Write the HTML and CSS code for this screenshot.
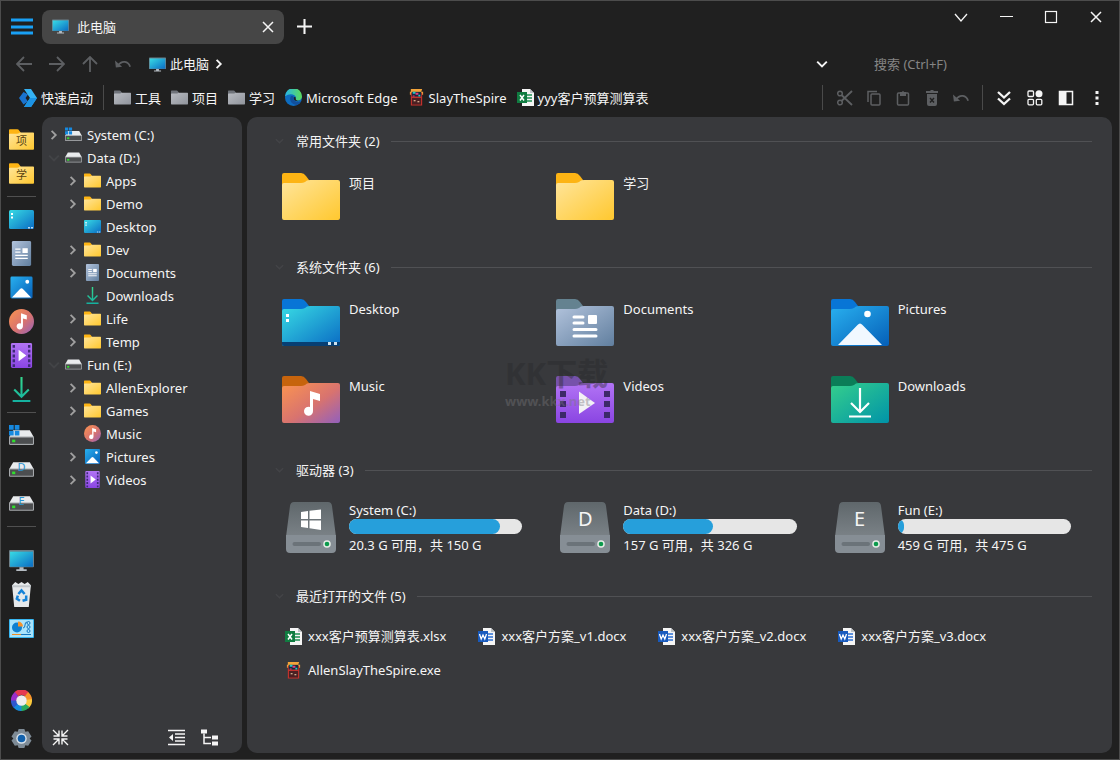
FILE: index.html
```html
<!DOCTYPE html>
<html lang="zh-CN">
  <head>
    <title>此电脑</title>
    <meta charset="UTF-8">
    <meta name="viewport" content="width=device-width, initial-scale=1">
    <link rel="stylesheet" href="styles.css">
  </head>
  <body>
    <!-- icon sprite -->
    <svg class="sprite" aria-hidden="true">
      <defs>
        <linearGradient id="g-yellow" x1="0" y1="0" x2="1" y2="1"><stop offset="0" stop-color="#ffe59b"/><stop offset="1" stop-color="#ffc82f"/></linearGradient>
        <linearGradient id="g-gray" x1="0" y1="0" x2="1" y2="1"><stop offset="0" stop-color="#b9bcc2"/><stop offset="1" stop-color="#90949c"/></linearGradient>
        <linearGradient id="g-cyan" x1="0" y1="0" x2="1" y2="1"><stop offset="0" stop-color="#38dbe4"/><stop offset="1" stop-color="#0a6cc4"/></linearGradient>
        <linearGradient id="g-blue" x1="0" y1="0" x2="1" y2="1"><stop offset="0" stop-color="#29b0ef"/><stop offset="1" stop-color="#055fb8"/></linearGradient>
        <linearGradient id="g-doc" x1="0" y1="0" x2="1" y2="1"><stop offset="0" stop-color="#b2c3dc"/><stop offset="1" stop-color="#617f9f"/></linearGradient>
        <linearGradient id="g-music" x1="0" y1="0" x2="1" y2="1"><stop offset="0" stop-color="#fb9450"/><stop offset=".55" stop-color="#d8736f"/><stop offset="1" stop-color="#9260bd"/></linearGradient>
        <linearGradient id="g-video" x1="0" y1="0" x2="0" y2="1"><stop offset="0" stop-color="#b274f5"/><stop offset="1" stop-color="#8a45e2"/></linearGradient>
        <linearGradient id="g-down" x1="0" y1="0" x2="1" y2="1"><stop offset="0" stop-color="#35cf8c"/><stop offset="1" stop-color="#0093a8"/></linearGradient>
        <linearGradient id="g-line" gradientUnits="userSpaceOnUse" x1="0" y1="0" x2="0" y2="24"><stop offset="0" stop-color="#35d98f"/><stop offset="1" stop-color="#14b0a0"/></linearGradient>
        <linearGradient id="g-drive" x1="0" y1="0" x2="0" y2="1"><stop offset="0" stop-color="#5f676b"/><stop offset="1" stop-color="#7b8287"/></linearGradient>
        <linearGradient id="g-edge" x1="0" y1="0" x2="1" y2="0"><stop offset="0" stop-color="#28b5e8"/><stop offset="1" stop-color="#5ddc58"/></linearGradient>
        <path id="folder-back" d="M0 2Q0 0 2 0H19Q22 0 24 3L27 7V14H0Z"/>
        <path id="folder-front" d="M0 12Q0 10 2 10H19Q21 10 23 9L25 7.500Q26 7 28 7H56Q58 7 58 9V45Q58 47 56 47H2Q0 47 0 45Z"/>
        <path id="note" d="M28 15L38 18V25L31 23V35A4.500 4.500 0 1 1 28 31Z"/>
      </defs>

      <symbol id="i-menu" viewBox="0 0 22 18"><path d="M0 2H22M0 9H22M0 15H22" stroke="#19a0f5" stroke-width="3"/></symbol>
      <symbol id="i-pc" viewBox="0 0 24 20"><rect width="24" height="16.500" rx="1" fill="#6d7f88"/><rect x="1" y="1.500" width="22" height="14.500" fill="url(#g-cyan)"/><path d="M10 16.500H14V18.500H17V20H7V18.500H10Z" fill="#b5bcc2"/></symbol>
      <symbol id="i-x" viewBox="0 0 12 12"><path d="M1 1L11 11M11 1L1 11" stroke="currentColor" stroke-width="1.500"/></symbol>
      <symbol id="i-plus" viewBox="0 0 16 16"><path d="M8 0V16M0 8H16" stroke="currentColor" stroke-width="2.200"/></symbol>
      <symbol id="i-left" viewBox="0 0 16 16"><path d="M16 8H1M8 1L1 8L8 15" fill="none" stroke="currentColor" stroke-width="1.800"/></symbol>
      <symbol id="i-right" viewBox="0 0 16 16"><path d="M0 8H15M8 1L15 8L8 15" fill="none" stroke="currentColor" stroke-width="1.800"/></symbol>
      <symbol id="i-up" viewBox="0 0 16 16"><path d="M8 16V1M1 8L8 1L15 8" fill="none" stroke="currentColor" stroke-width="1.800"/></symbol>
      <symbol id="i-undo" viewBox="0 0 18 12"><path d="M3 8C8 1 15 3 17 9" fill="none" stroke="currentColor" stroke-width="2"/><path d="M0 2L1 10L8 9Z" fill="currentColor"/></symbol>
      <symbol id="i-chev-r" viewBox="0 0 10 10"><path d="M3 1.500L6.500 5L3 8.500" fill="none" stroke="currentColor" stroke-width="1.500"/></symbol>
      <symbol id="i-chev-d" viewBox="0 0 10 10"><path d="M1 3L5 7L9 3" fill="none" stroke="currentColor" stroke-width="1.600"/></symbol>
      <symbol id="i-wide-d" viewBox="0 0 14 14"><path d="M1 4L7 11L13 4" fill="none" stroke="currentColor" stroke-width="1.300"/></symbol>
      <symbol id="i-min" viewBox="0 0 14 14"><path d="M1 6.500H14" stroke="currentColor"/></symbol>
      <symbol id="i-max" viewBox="0 0 14 14"><rect x="1.500" y="1.500" width="11" height="11" fill="none" stroke="currentColor" stroke-width="1.200"/></symbol>

      <symbol id="i-launch" viewBox="0 0 18 18"><path d="M4.500 3L0 9L4.500 15.500L9 12.500L6.500 9L9 5.500Z" fill="#1a73cf"/><path d="M5 0H12L15 4.500L18 9L15 13.500L12 18H5L11 9Z" fill="#35b2f3"/><path d="M11 9H18L12 18H5Z" fill="#1c93e4"/></symbol>
      <symbol id="i-folder" viewBox="0 0 58 47"><use href="#folder-back" fill="#fdb414"/><use href="#folder-front" fill="url(#g-yellow)"/></symbol>
      <symbol id="i-gfolder" viewBox="0 0 58 47"><use href="#folder-back" fill="#6f737a"/><use href="#folder-front" fill="url(#g-gray)"/></symbol>
      <symbol id="i-edge" viewBox="0 0 18 18"><circle cx="9" cy="9" r="9" fill="#0d6cc0"/><path d="M0 8A9 9 0 0 1 18 8C18 11 15 13 12 12C10.500 11.500 11.500 10.500 11.500 9C11.500 6 5 3.500 0 8Z" fill="url(#g-edge)"/><path d="M6 8C4 13 8 17 13 17A9 9 0 0 0 17 13C13 15 8.500 13 9 9C9 7.500 7 7 6 8Z" fill="#124f9c"/><path d="M9.500 8.500C8.500 11.500 11 14 16 12.500C13.500 13 10.500 12 11.500 9Z" fill="#202020"/></symbol>
      <symbol id="i-spire" viewBox="0 0 16 18"><path d="M2 0H14L13 3H15V6H1V3H2Z" fill="#f3a43a"/><rect x="2" y="4" width="12" height="13.500" fill="#c5322d"/><rect x="3" y="3" width="10" height="5" fill="#142b3c"/><path d="M4 3H7V5H4ZM10 6H12V8H10Z" fill="#24c5ca"/><path d="M7 4H10V6H7ZM4 7H6V8H4Z" fill="#e33c83"/><rect x="3.200" y="9.500" width="9.600" height="7" fill="#4b2023"/><path d="M5 12H7V13H5ZM9 13H11V14H9Z" fill="#ffd9b0"/></symbol>
      <symbol id="i-excel" viewBox="0 0 17 17"><path d="M5 0H13L17 4V17H5Z" fill="#f5f5f5"/><path d="M13 0V4H17Z" fill="#bfc4c8"/><path d="M10 6H15M10 9H15M10 12H15" stroke="#1d8f52" stroke-width="1.400"/><rect y="3" width="10" height="11" fill="#107c41"/><path d="M3 6L7 11.500M7 6L3 11.500" stroke="#fff" stroke-width="1.500"/></symbol>
      <symbol id="i-word" viewBox="0 0 17 17"><path d="M5 0H13L17 4V17H5Z" fill="#f5f5f5"/><path d="M13 0V4H17Z" fill="#bfc4c8"/><path d="M10 6H15M10 9H15M10 12H15" stroke="#2b6fd3" stroke-width="1.400"/><rect y="3" width="10" height="11" fill="#185abd"/><path d="M1.500 6L3.200 11L5 7L6.800 11L8.500 6" fill="none" stroke="#fff" stroke-width="1.300"/></symbol>

      <symbol id="i-cut" viewBox="0 0 16 16"><path d="M4.500 5L15 15M4.500 11L15 1" stroke="currentColor" stroke-width="1.800"/><circle cx="3" cy="3.500" r="2.300" fill="none" stroke="currentColor" stroke-width="1.500"/><circle cx="3" cy="12.500" r="2.300" fill="none" stroke="currentColor" stroke-width="1.500"/></symbol>
      <symbol id="i-copy" viewBox="0 0 16 16"><rect x="5" y="4" width="9" height="11" rx="1" fill="none" stroke="currentColor" stroke-width="1.500"/><path d="M2 12V1.500H11" fill="none" stroke="currentColor" stroke-width="1.500"/></symbol>
      <symbol id="i-paste" viewBox="0 0 16 16"><rect x="2.500" y="3" width="11" height="12" rx="1" fill="none" stroke="currentColor" stroke-width="1.500"/><path d="M5 6V2H7Q8 0 9 2H11V6Z" fill="currentColor"/></symbol>
      <symbol id="i-trash" viewBox="0 0 16 16"><path d="M2 1H6L7 0H9L10 1H14V3H2ZM3 4H13V14Q13 16 11 16H5Q3 16 3 14Z" fill="currentColor"/><path d="M6 8L10 12.500M10 8L6 12.500" stroke="#202020" stroke-width="1.400"/></symbol>
      <symbol id="i-dbl" viewBox="0 0 16 16"><path d="M2 2L8 7.500L14 2M2 8.500L8 14L14 8.500" fill="none" stroke="currentColor" stroke-width="2.300"/></symbol>
      <symbol id="i-grid" viewBox="0 0 16 16"><g fill="none" stroke="currentColor" stroke-width="1.300"><rect x="1" y="1" width="5.500" height="5.500" rx="1"/><rect x="1" y="9.300" width="5.500" height="5.500" rx="1"/><rect x="9.300" y="9.300" width="5.500" height="5.500" rx="1"/></g><circle cx="12" cy="3.700" r="3.500" fill="currentColor"/></symbol>
      <symbol id="i-panel" viewBox="0 0 16 16"><rect x="1.500" y="1.500" width="13" height="13" fill="none" stroke="currentColor" stroke-width="1.500"/><rect x="1" y="1" width="7.500" height="14" fill="currentColor"/></symbol>
      <symbol id="i-dots" viewBox="0 0 16 16"><path d="M6.500 1H9.500V4H6.500ZM6.500 6.500H9.500V9.500H6.500ZM6.500 12H9.500V15H6.500Z" fill="currentColor"/></symbol>

      <symbol id="i-desktop" viewBox="0 0 25 19"><rect width="25" height="19" rx="1.500" fill="url(#g-cyan)"/><path d="M2 3H4V5H2ZM2 6.500H4V8.500H2Z" fill="#fff"/><path d="M19 17H21V18.500H19ZM22 17H24V18.500H22Z" fill="#b9d9f2"/></symbol>
      <symbol id="i-doc" viewBox="0 0 20 26"><rect width="20" height="26" rx="1.500" fill="url(#g-doc)"/><path d="M3.500 8.500H9M3.500 11.500H9M3.500 15H16.500M3.500 18H16.500" stroke="#fff" stroke-width="1.400"/><rect x="11" y="7.500" width="5.500" height="5" fill="#fff"/></symbol>
      <symbol id="i-pic" viewBox="0 0 26 26"><rect x="1.500" y="1.500" width="23" height="23" rx="1.500" fill="url(#g-blue)"/><path d="M3 23.500L11.500 14.500Q13 13 14.500 14.500L23 23.500Z" fill="#fff"/><circle cx="19" cy="7" r="2" fill="#fff"/></symbol>
      <symbol id="i-music" viewBox="0 0 26 26"><circle cx="13" cy="13" r="13" fill="url(#g-music)"/><path d="M12.500 4.500L18.500 6.500V11L14.500 10V18A3.300 3.300 0 1 1 12.500 15Z" fill="#fff"/></symbol>
      <symbol id="i-video" viewBox="0 0 22 26"><rect width="22" height="26" rx="1.500" fill="url(#g-video)"/><path d="M3 2V25M19 2V25" stroke="#3e2b77" stroke-width="2.500" stroke-dasharray="3 2"/><path d="M8 7L16 13L8 19Z" fill="#fff"/></symbol>
      <symbol id="i-down" viewBox="0 0 20 24"><path d="M10 0V19M3 12L10 19L17 12M1.500 23H18.500" fill="none" stroke="url(#g-line)" stroke-width="2"/></symbol>
      <symbol id="i-drive" viewBox="0 0 24 16"><path d="M4 1H20L24 8H0Z" fill="#e9ebed"/><rect y="7" width="24" height="8" rx="1" fill="#a6a9ac"/><rect x="1" y="8" width="22" height="6" fill="#4c4e50"/><rect x="3" y="10" width="3" height="2.500" fill="#30e02d"/></symbol>
      <symbol id="i-drive-c" viewBox="0 0 24 20"><use href="#i-drive" y="4" width="24" height="16"/><path d="M0 0H4.500V4.500H0ZM5.500 0H10V4.500H5.500ZM0 5.500H4.500V10H0ZM5.500 5.500H10V10H5.500Z" fill="#1689e0"/></symbol>
      <symbol id="i-bin" viewBox="0 0 20 24"><path d="M1 3L4 0L7 2L10 0L13 2L16 0L19 3L17 24H3Z" fill="#e6e9eb"/><path d="M1 3H19L18.700 5H1.300Z" fill="#c3c8cc"/><path d="M7 11.500L10 8L13 11.500M14.500 13L14.500 17L11 18M8.500 18L5.500 16L6.500 13" fill="none" stroke="#1683d8" stroke-width="2.400"/></symbol>
      <symbol id="i-control" viewBox="0 0 25 19"><rect width="25" height="19" rx="1" fill="#38b6f1"/><rect x="1" y="1" width="23" height="17" fill="#a9e3fb"/><circle cx="8" cy="8.500" r="5" fill="#0f80d0"/><path d="M9 7.500V2.500A5 5 0 0 1 14 7.500Z" fill="#f7932b"/><path d="M3 15.500H12" stroke="#ee8b22"/><path d="M12 15.500H22M14 9Q16 9 16 6T18 3" fill="none" stroke="#1676bd"/><g fill="none" stroke="#1676bd"><circle cx="19.500" cy="4" r="1.500"/><circle cx="19.500" cy="8" r="1.500"/><circle cx="19.500" cy="12" r="1.500"/></g></symbol>
      <symbol id="i-wheel" viewBox="0 0 22 22"><g fill="none" stroke-width="6"><path d="M5.500 4.500A8 8 0 0 1 16.500 4.500" stroke="#e53950"/><path d="M16 4.500A8 8 0 0 1 19 11" stroke="#f7932b"/><path d="M19 10A8 8 0 0 1 16 17" stroke="#fbc93c"/><path d="M17 16A8 8 0 0 1 10 19" stroke="#2bab5c"/><path d="M11 19A8 8 0 0 1 4 15" stroke="#178bdb"/><path d="M5 16.500A8 8 0 0 1 3 10" stroke="#2f57cf"/><path d="M3 11A8 8 0 0 1 6 4.500" stroke="#9a2fc9"/></g><circle cx="11" cy="11" r="5.500" fill="#eee"/></symbol>
      <symbol id="i-gear" viewBox="0 0 22 22"><path d="M8 1H14L15 4L18 3.500L21.500 9L19.500 11L21.500 13L18 18.500L15 18L14 21H8L7 18L4 18.500L.5 13L2.500 11L.5 9L4 3.500L7 4Z" fill="#7e8b96"/><circle cx="11" cy="11" r="5.500" fill="#d9e2ea"/><circle cx="11" cy="11" r="4" fill="#1261ac"/></symbol>
      <symbol id="i-collapse" viewBox="0 0 17 17"><path d="M1 1L6.500 6.500M16 1L10.500 6.500M1 16L6.500 10.500M16 16L10.500 10.500M7 1.500V7H1.500M10 1.500V7H15.500M7 15.500V10H1.500M10 15.500V10H15.500" fill="none" stroke="currentColor" stroke-width="1.400"/></symbol>
      <symbol id="i-outdent" viewBox="0 0 17 16"><path d="M0 1H17M7 4.500H17M7 8H17M7 11.500H17M0 15H17" stroke="currentColor" stroke-width="1.700"/><path d="M5 4.500V11.500L1 8Z" fill="currentColor"/></symbol>
      <symbol id="i-tree" viewBox="0 0 17 16"><path d="M0 0H6V4H0ZM11 6H17V10H11ZM11 12H17V16H11Z" fill="currentColor"/><path d="M3 4V14H10M3 8H10" fill="none" stroke="currentColor" stroke-width="1.500"/></symbol>

      <symbol id="f-desktop" viewBox="0 0 58 47"><use href="#folder-back" fill="#0875d6"/><use href="#folder-front" fill="url(#g-cyan)"/><path d="M0 43H58V45Q58 47 56 47H2Q0 47 0 45Z" fill="#073f73"/><path d="M4 15H7V18H4ZM4 20H7V23H4Z" fill="#fff"/><path d="M46 43H49V46H46ZM52 43H55V46H52Z" fill="#cfe2ee"/></symbol>
      <symbol id="f-doc" viewBox="0 0 58 47"><use href="#folder-back" fill="#648290"/><use href="#folder-front" fill="url(#g-doc)"/><path d="M18 18H27M18 24H27M18 30.500H40M18 37H40" stroke="#fff" stroke-width="3" stroke-linecap="round"/><rect x="32" y="16" width="9" height="9" rx="1" fill="#fff"/></symbol>
      <symbol id="f-pic" viewBox="0 0 58 47"><use href="#folder-back" fill="#0875d6"/><use href="#folder-front" fill="url(#g-blue)"/><path d="M7 46L26.500 26Q29 23 31.500 26L51 46Z" fill="#f1f8ff"/><circle cx="36.500" cy="15" r="3.300" fill="#fff"/></symbol>
      <symbol id="f-music" viewBox="0 0 58 47"><use href="#folder-back" fill="#c7640d"/><use href="#folder-front" fill="url(#g-music)"/><use href="#note" fill="#fff"/></symbol>
      <symbol id="f-video" viewBox="0 0 58 47"><use href="#folder-back" fill="#7652ab"/><use href="#folder-front" fill="url(#g-video)"/><path d="M4 15H10V21H4ZM4 25H10V31H4ZM4 36H10V42H4ZM48 15H54V21H48ZM48 25H54V31H48ZM48 36H54V42H48Z" fill="#3c2968"/><path d="M23 15.500L39 27L23 38Z" fill="#f3f1f5"/></symbol>
      <symbol id="f-down" viewBox="0 0 58 47"><use href="#folder-back" fill="#0b7d58"/><use href="#folder-front" fill="url(#g-down)"/><path d="M29 12V36M20 27L29 36L38 27M18 40.500H40" fill="none" stroke="#fff" stroke-width="2.200"/></symbol>
      <symbol id="d-body" viewBox="0 0 50 51"><path d="M4 4Q4.500 0 8 0H42Q45.500 0 46 4L50 35H0Z" fill="url(#g-drive)"/><path d="M0 33H50V47Q50 51 46 51H4Q0 51 0 47Z" fill="#868e95"/><path d="M8.500 42H33" stroke="#6b7379" stroke-width="4" stroke-linecap="round"/><circle cx="41" cy="42" r="3.800" fill="#e4ece5"/><circle cx="41" cy="42" r="2.300" fill="#0b9a4c"/></symbol>
      <symbol id="d-c" viewBox="0 0 50 51"><use href="#d-body" width="50" height="51"/><path d="M15 10L22 9V17H15ZM23.500 8.700L35 7.500V17H23.500ZM15 18.500H22V26L15 25ZM23.500 18.500H35V28L23.500 26.300Z" fill="#fff"/></symbol>
    </svg>

    <div class="window">
      <header class="titlebar">
        <button class="menu-btn" aria-label="菜单"><svg><use href="#i-menu"/></svg></button>
        <div class="tab">
          <svg class="ico"><use href="#i-pc"/></svg>
          <span>此电脑</span>
          <button class="tab-close" aria-label="关闭标签"><svg><use href="#i-x"/></svg></button>
        </div>
        <button class="tab-add" aria-label="新标签"><svg><use href="#i-plus"/></svg></button>
        <div class="win-controls">
          <button aria-label="更多"><svg><use href="#i-wide-d"/></svg></button>
          <button aria-label="最小化"><svg><use href="#i-min"/></svg></button>
          <button aria-label="最大化"><svg><use href="#i-max"/></svg></button>
          <button aria-label="关闭"><svg><use href="#i-x"/></svg></button>
        </div>
      </header>

      <nav class="address">
        <div class="history">
          <button aria-label="后退"><svg><use href="#i-left"/></svg></button>
          <button aria-label="前进"><svg><use href="#i-right"/></svg></button>
          <button aria-label="向上"><svg><use href="#i-up"/></svg></button>
          <button aria-label="撤销"><svg><use href="#i-undo"/></svg></button>
        </div>
        <button class="crumb"><svg class="ico"><use href="#i-pc"/></svg>此电脑<svg class="chev"><use href="#i-chev-r"/></svg></button>
        <button class="drop" aria-label="历史路径"><svg class="chev"><use href="#i-chev-d"/></svg></button>
        <input class="search" type="search" placeholder="搜索 (Ctrl+F)" aria-label="搜索">
      </nav>

      <div class="toolbar">
        <div class="links">
          <button class="launch"><svg class="ico"><use href="#i-launch"/></svg>快速启动</button>
          <i class="sep"></i>
          <button><svg class="ico"><use href="#i-gfolder"/></svg>工具</button>
          <button><svg class="ico"><use href="#i-gfolder"/></svg>项目</button>
          <button><svg class="ico"><use href="#i-gfolder"/></svg>学习</button>
          <button><svg class="ico"><use href="#i-edge"/></svg>Microsoft Edge</button>
          <button><svg class="ico"><use href="#i-spire"/></svg>SlayTheSpire</button>
          <button><svg class="ico"><use href="#i-excel"/></svg>yyy客户预算测算表</button>
        </div>
        <i class="sep"></i>
        <div class="tools tools-off">
          <button aria-label="剪切"><svg><use href="#i-cut"/></svg></button>
          <button aria-label="复制"><svg><use href="#i-copy"/></svg></button>
          <button aria-label="粘贴"><svg><use href="#i-paste"/></svg></button>
          <button aria-label="删除"><svg><use href="#i-trash"/></svg></button>
          <button aria-label="撤销"><svg><use href="#i-undo"/></svg></button>
        </div>
        <i class="sep"></i>
        <div class="tools">
          <button aria-label="展开"><svg><use href="#i-dbl"/></svg></button>
          <button aria-label="视图"><svg><use href="#i-grid"/></svg></button>
          <button aria-label="面板"><svg><use href="#i-panel"/></svg></button>
          <button aria-label="更多"><svg><use href="#i-dots"/></svg></button>
        </div>
      </div>

      <div class="main">
        <aside class="rail">
          <button class="rail-folder"><svg><use href="#i-folder"/></svg><span>项</span></button>
          <button class="rail-folder"><svg><use href="#i-folder"/></svg><span>学</span></button>
          <hr>
          <button aria-label="桌面"><svg><use href="#i-desktop"/></svg></button>
          <button aria-label="文档"><svg><use href="#i-doc"/></svg></button>
          <button aria-label="图片"><svg><use href="#i-pic"/></svg></button>
          <button aria-label="音乐"><svg><use href="#i-music"/></svg></button>
          <button aria-label="视频"><svg><use href="#i-video"/></svg></button>
          <button aria-label="下载"><svg><use href="#i-down"/></svg></button>
          <hr>
          <button aria-label="C 盘"><svg><use href="#i-drive-c"/></svg></button>
          <button class="rail-drive"><svg><use href="#i-drive"/></svg><span>D</span></button>
          <button class="rail-drive"><svg><use href="#i-drive"/></svg><span>E</span></button>
          <hr>
          <div class="rail-system">
            <button aria-label="此电脑"><svg><use href="#i-pc"/></svg></button>
            <button aria-label="回收站"><svg><use href="#i-bin"/></svg></button>
            <button aria-label="控制面板"><svg><use href="#i-control"/></svg></button>
          </div>
          <div class="rail-bottom">
            <button aria-label="主题"><svg><use href="#i-wheel"/></svg></button>
            <button aria-label="设置"><svg><use href="#i-gear"/></svg></button>
          </div>
        </aside>

        <aside class="tree">
          <ul>
            <li><button><svg class="chev"><use href="#i-chev-r"/></svg><svg class="ico"><use href="#i-drive-c"/></svg>System (C:)</button></li>
            <li><button><svg class="chev open"><use href="#i-chev-d"/></svg><svg class="ico"><use href="#i-drive"/></svg>Data (D:)</button>
              <ul>
                <li><button><svg class="chev"><use href="#i-chev-r"/></svg><svg class="ico"><use href="#i-folder"/></svg>Apps</button></li>
                <li><button><svg class="chev"><use href="#i-chev-r"/></svg><svg class="ico"><use href="#i-folder"/></svg>Demo</button></li>
                <li><button><svg class="chev"></svg><svg class="ico"><use href="#i-desktop"/></svg>Desktop</button></li>
                <li><button><svg class="chev"><use href="#i-chev-r"/></svg><svg class="ico"><use href="#i-folder"/></svg>Dev</button></li>
                <li><button><svg class="chev"><use href="#i-chev-r"/></svg><svg class="ico"><use href="#i-doc"/></svg>Documents</button></li>
                <li><button><svg class="chev"></svg><svg class="ico"><use href="#i-down"/></svg>Downloads</button></li>
                <li><button><svg class="chev"><use href="#i-chev-r"/></svg><svg class="ico"><use href="#i-folder"/></svg>Life</button></li>
                <li><button><svg class="chev"><use href="#i-chev-r"/></svg><svg class="ico"><use href="#i-folder"/></svg>Temp</button></li>
              </ul>
            </li>
            <li><button><svg class="chev open"><use href="#i-chev-d"/></svg><svg class="ico"><use href="#i-drive"/></svg>Fun (E:)</button>
              <ul>
                <li><button><svg class="chev"><use href="#i-chev-r"/></svg><svg class="ico"><use href="#i-folder"/></svg>AllenExplorer</button></li>
                <li><button><svg class="chev"><use href="#i-chev-r"/></svg><svg class="ico"><use href="#i-folder"/></svg>Games</button></li>
                <li><button><svg class="chev"></svg><svg class="ico"><use href="#i-music"/></svg>Music</button></li>
                <li><button><svg class="chev"><use href="#i-chev-r"/></svg><svg class="ico"><use href="#i-pic"/></svg>Pictures</button></li>
                <li><button><svg class="chev"><use href="#i-chev-r"/></svg><svg class="ico"><use href="#i-video"/></svg>Videos</button></li>
              </ul>
            </li>
          </ul>
          <div class="tree-tools">
            <button aria-label="收起"><svg><use href="#i-collapse"/></svg></button>
            <button aria-label="减少缩进"><svg><use href="#i-outdent"/></svg></button>
            <button aria-label="树形"><svg><use href="#i-tree"/></svg></button>
          </div>
        </aside>

        <main class="content">
          <section>
            <h2><svg class="chev open"><use href="#i-chev-d"/></svg>常用文件夹 (2)</h2>
            <div class="grid">
              <a class="item" href="#"><svg class="big"><use href="#i-folder"/></svg>项目</a>
              <a class="item" href="#"><svg class="big"><use href="#i-folder"/></svg>学习</a>
            </div>
          </section>
          <section>
            <h2><svg class="chev open"><use href="#i-chev-d"/></svg>系统文件夹 (6)</h2>
            <div class="grid">
              <a class="item" href="#"><svg class="big"><use href="#f-desktop"/></svg>Desktop</a>
              <a class="item" href="#"><svg class="big"><use href="#f-doc"/></svg>Documents</a>
              <a class="item" href="#"><svg class="big"><use href="#f-pic"/></svg>Pictures</a>
              <a class="item" href="#"><svg class="big"><use href="#f-music"/></svg>Music</a>
              <a class="item" href="#"><svg class="big"><use href="#f-video"/></svg>Videos</a>
              <a class="item" href="#"><svg class="big"><use href="#f-down"/></svg>Downloads</a>
            </div>
            <div class="watermark" aria-hidden="true"><b>KK下载</b><span>www.kkx.net</span></div>
          </section>
          <section>
            <h2><svg class="chev open"><use href="#i-chev-d"/></svg>驱动器 (3)</h2>
            <div class="grid">
              <a class="item drive" href="#"><div class="disk"><svg class="big"><use href="#d-c"/></svg></div>
                <div class="info"><div>System (C:)</div><div class="bar"><div class="used" style="width: 87%"></div></div><div class="free">20.3 G 可用，共 150 G</div></div></a>
              <a class="item drive" href="#"><div class="disk"><svg class="big"><use href="#d-body"/></svg><span>D</span></div>
                <div class="info"><div>Data (D:)</div><div class="bar"><div class="used" style="width: 52%"></div></div><div class="free">157 G 可用，共 326 G</div></div></a>
              <a class="item drive" href="#"><div class="disk"><svg class="big"><use href="#d-body"/></svg><span>E</span></div>
                <div class="info"><div>Fun (E:)</div><div class="bar"><div class="used" style="width: 3.4%"></div></div><div class="free">459 G 可用，共 475 G</div></div></a>
            </div>
          </section>
          <section>
            <h2><svg class="chev open"><use href="#i-chev-d"/></svg>最近打开的文件 (5)</h2>
            <div class="files">
              <a href="#"><svg class="ico"><use href="#i-excel"/></svg>xxx客户预算测算表.xlsx</a>
              <a href="#"><svg class="ico"><use href="#i-word"/></svg>xxx客户方案_v1.docx</a>
              <a href="#"><svg class="ico"><use href="#i-word"/></svg>xxx客户方案_v2.docx</a>
              <a href="#"><svg class="ico"><use href="#i-word"/></svg>xxx客户方案_v3.docx</a>
              <a href="#"><svg class="ico"><use href="#i-spire"/></svg>AllenSlayTheSpire.exe</a>
            </div>
          </section>
        </main>
      </div>
    </div>
  </body>
</html>
```
FILE: styles.css
```css
* {
    box-sizing: border-box;
}

body {
    margin: 0;
    background: #202020;
    color: #f5f5f5;
    font: 13px/20px "Noto Sans", "Noto Sans CJK SC", sans-serif;
}

button {
    display: flex;
    align-items: center;
    justify-content: center;
    padding: 0;
    border: 0;
    background: none;
    color: inherit;
    font: inherit;
    white-space: nowrap;
}

a {
    color: inherit;
    text-decoration: none;
}

svg {
    display: block;
    flex: none;
}

.sprite {
    position: absolute;
    width: 0;
    height: 0;
}

.ico {
    width: 17px;
    height: 17px;
}

.chev {
    width: 12px;
    height: 12px;
}

.window {
    display: flex;
    flex-direction: column;
    min-height: 100vh;
    border: 1px solid #4c4c4c;
}

/* title bar */
.titlebar {
    display: flex;
    align-items: center;
    height: 51px;
}

.menu-btn {
    width: 41px;
}

.menu-btn svg {
    width: 22px;
    height: 18px;
}

.tab {
    display: flex;
    align-items: center;
    gap: 8px;
    width: 242px;
    height: 34px;
    padding: 0 10px;
    border-radius: 8px;
    background: #464646;
}

.tab-close {
    margin-left: auto;
}

.tab-close svg {
    width: 12px;
    height: 12px;
}

.tab-add {
    width: 40px;
}

.tab-add svg {
    width: 15px;
    height: 15px;
}

.win-controls {
    display: flex;
    align-self: flex-start;
    margin: 0 1px 0 auto;
}

.win-controls button {
    width: 45px;
    height: 32px;
}

.win-controls svg {
    width: 14px;
    height: 14px;
}

.win-controls button:last-child svg {
    width: 12px;
}

/* address bar */
.address {
    display: flex;
    align-items: center;
    height: 24px;
    padding-left: 6px;
}

.history {
    display: flex;
    color: #5d5f62;
}

.history button {
    width: 33px;
}

.history svg {
    width: 16px;
    height: 16px;
}

.crumb {
    gap: 4px;
    margin-left: 10px;
}

.drop {
    width: 40px;
    margin-left: auto;
}

.search {
    width: 245px;
    margin-left: 32px;
    padding: 0;
    border: 0;
    outline: 0;
    background: none;
    color: #f5f5f5;
    font: inherit;
}

.search::placeholder {
    color: #858585;
}

/* toolbar */
.toolbar {
    display: flex;
    align-items: center;
    height: 41px;
    padding: 2px 7px 0 18px;
}

.links {
    display: flex;
    align-items: center;
    gap: 10px;
    margin-right: auto;
}

.links button {
    gap: 4px;
}

.links .launch .ico {
    width: 18px;
    height: 18px;
}

.sep {
    width: 1px;
    height: 25px;
    background: #4a4a4a;
}

.tools {
    display: flex;
}

.tools button {
    width: 31px;
}

.tools svg {
    width: 16px;
    height: 16px;
}

.tools-off {
    padding: 0 7px;
    color: #5d5f62;
}

.tools-off button {
    width: 29px;
}

.tools:last-child {
    padding-left: 5px;
}

/* body */
.main {
    display: flex;
    flex: 1;
    padding: 0 7px 0 0;
}

.rail {
    display: flex;
    flex-direction: column;
    width: 41px;
    padding: 5px 0 4px;
}

.rail button {
    width: 100%;
    height: 34px;
    position: relative;
}

.rail svg {
    width: 25px;
    height: 25px;
}

.rail hr {
    width: 29px;
    margin: 6px auto 5px;
    border: 0;
    border-top: 1px solid #505050;
}

/* name of the pinned folder or drive, drawn on its icon */
.rail span {
    position: absolute;
    inset: 2px 0 0;
    line-height: 34px;
    font-size: 11px;
}

.rail-folder span {
    color: #5a4412;
}

.rail .rail-drive span {
    inset: -2px 0 0;
    color: #2b93d1;
}

.rail-system {
    margin-top: 11px;
}

.rail-bottom {
    display: grid;
    gap: 4px;
    margin-top: auto;
}

.rail-bottom svg {
    width: 21px;
    height: 21px;
}

.tree,
.content {
    border-radius: 10px;
    background: #38393c;
    margin-bottom: 6px;
}

.tree {
    display: flex;
    flex-direction: column;
    width: 200px;
    padding-top: 6px;
}

.tree ul {
    margin: 0;
    padding: 0;
    list-style: none;
}

.tree li button {
    justify-content: flex-start;
    gap: 5px;
    width: 100%;
    height: 23px;
    padding-left: 6px;
}

.tree ul ul button {
    padding-left: 25px;
}

.tree .chev {
    color: #a0a0a0;
}

.tree .open,
.content .open {
    color: #434447;
}

.tree-tools {
    display: flex;
    gap: 16px;
    margin-top: auto;
    padding: 0 24px 7px 10px;
}

.tree-tools button:first-child {
    margin-right: auto;
}

.tree-tools svg {
    width: 17px;
    height: 17px;
}

.content {
    flex: 1;
    min-width: 0;
    margin-left: 5px;
    padding: 14px 0 14px 28px;
}

section {
    position: relative;
    margin-bottom: 28px;
}

h2 {
    display: flex;
    align-items: center;
    margin: 0 20px 0 0;
    font-size: 13px;
    font-weight: 400;
}

h2 .chev {
    width: 9px;
    margin-right: 12px;
}

h2::after {
    content: "";
    flex: 1;
    height: 1px;
    margin-left: 11px;
    background: #505154;
}

.grid {
    display: grid;
    grid-template-columns: repeat(3, 1fr);
    grid-auto-rows: 56px;
    row-gap: 21px;
    padding: 22px 14px 0 0;
}

.item {
    display: flex;
    gap: 9px;
    padding: 0 27px 0 7px;
}

.big {
    width: 58px;
    height: 47px;
}

.disk {
    position: relative;
}

.disk .big {
    height: 51px;
}

/* drive letter over the disk icon */
.disk span {
    position: absolute;
    inset: 0;
    font-size: 20px;
    line-height: 34px;
    text-align: center;
}

.info {
    flex: 1;
    line-height: 17px;
}

.free {
    line-height: 22px;
}

.bar {
    height: 15px;
    overflow: hidden;
    border-radius: 8px;
    background: #e6e6e6;
}

.used {
    height: 100%;
    border-radius: 0 8px 8px 0;
    background: #269fdb;
}

.files {
    display: flex;
    flex-wrap: wrap;
    gap: 14px 32px;
    padding: 20px 20px 0 10px;
}

.files a {
    display: flex;
    align-items: center;
    gap: 6px;
}

.watermark {
    position: absolute;
    top: 98px;
    left: 230px;
    opacity: .4;
}

.watermark b {
    display: block;
    color: #28292b;
    font-size: 31px;
    line-height: 36px;
}

.watermark span {
    color: #77777a;
    font-size: 13px;
    font-weight: 700;
}
```
